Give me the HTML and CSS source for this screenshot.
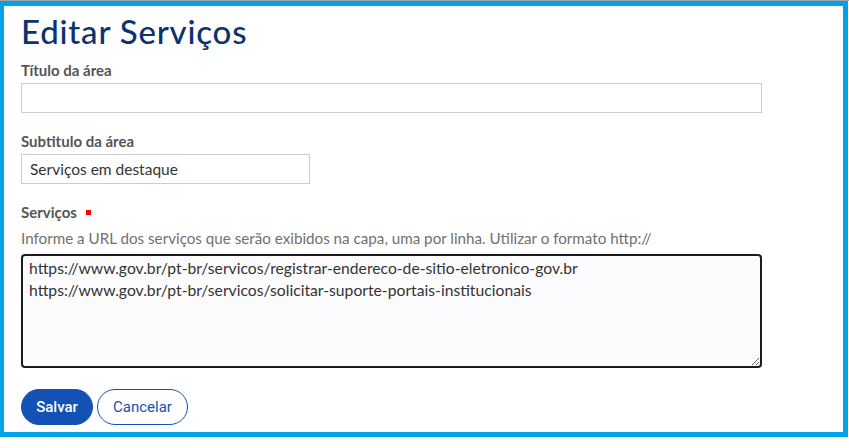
FILE: index.html
```html
<!DOCTYPE html>
<html lang="pt-BR">
<head>
<meta charset="utf-8">
<title>Editar Serviços</title>
<link rel="stylesheet" href="styles.css">
</head>
<body>
<div class="topline"></div>
<div class="frame">
  <h1 class="title">Editar Serviços</h1>
  <div class="field">
    <label class="label" for="titulo">Título da área</label>
    <input class="input input-wide" id="titulo" type="text">
  </div>
  <div class="field">
    <label class="label" for="subtitulo">Subtitulo da área</label>
    <input class="input input-short" id="subtitulo" type="text" value="Serviços em destaque">
  </div>
  <div class="field">
    <label class="label" for="servicos">Serviços <span class="required"></span></label>
    <div class="help">Informe a URL dos serviços que serão exibidos na capa, uma por linha. Utilizar o formato http://</div>
    <textarea class="textarea" id="servicos">https://www.gov.br/pt-br/servicos/registrar-endereco-de-sitio-eletronico-gov.br
https://www.gov.br/pt-br/servicos/solicitar-suporte-portais-institucionais</textarea>
  </div>
  <div class="actions">
    <button class="btn btn-primary" type="button">Salvar</button>
    <button class="btn btn-secondary" type="button">Cancelar</button>
  </div>
</div>
</body>
</html>
```
FILE: styles.css
```css
html, body {
  margin: 0;
  padding: 0;
  background: #ffffff;
}
body {
  font-family: Lato, "Open Sans", sans-serif;
  color: #333333;
}
.topline {
  height: 1px;
  background: #a3a3a3;
}
.frame {
  box-sizing: border-box;
  width: 848px;
  height: 436px;
  border: 5px solid #00a2e8;
  border-left-width: 4px;
  padding: 5px 17px 0 17px;
}
.title {
  margin: 0;
  font-size: 33px;
  line-height: 40px;
  font-weight: 500;
  letter-spacing: 0.8px;
  color: #0c326f;
}
.field {
  display: flex;
  flex-direction: column;
  align-items: flex-start;
}
.label {
  font-size: 15px;
  font-weight: 700;
  line-height: 20px;
  color: #555555;
  margin-top: 9px;
  margin-bottom: 3px;
  display: flex;
  align-items: center;
  gap: 9px;
}
.required {
  width: 5px;
  height: 5px;
  background: #ff0000;
  display: inline-block;
  margin-top: 1px;
}
.input {
  box-sizing: border-box;
  height: 30px;
  border: 1px solid #cccccc;
  padding: 0 8px;
  font-family: inherit;
  font-size: 15.5px;
  color: #333333;
  background: #ffffff;
  margin: 0 0 9px 0;
}
.input-wide { width: 741px; }
.input-short { width: 289px; }
.help {
  font-size: 15.2px;
  line-height: 20px;
  color: #707070;
  margin-top: 3px;
  margin-bottom: 6px;
}
.textarea {
  box-sizing: border-box;
  width: 741px;
  height: 114px;
  border: 2px solid #1b1b1b;
  border-radius: 4px;
  background: #fcfcfe;
  padding: 1px 6px;
  font-family: inherit;
  font-size: 15.7px;
  line-height: 22px;
  color: #333333;
  margin: 0;
  resize: vertical;
}
.actions {
  display: flex;
  gap: 4px;
  margin-top: 21px;
}
.btn {
  box-sizing: border-box;
  height: 36px;
  border-radius: 18px;
  font-family: Roboto, sans-serif;
  font-size: 15px;
  padding: 0;
  cursor: pointer;
}
.btn-primary {
  background: #1351b4;
  border: 1px solid #1351b4;
  color: #ffffff;
  font-weight: 500;
  width: 72px;
}
.btn-secondary {
  background: #ffffff;
  border: 1px solid #1351b4;
  color: #1351b4;
  font-weight: 400;
  width: 91px;
}
```
